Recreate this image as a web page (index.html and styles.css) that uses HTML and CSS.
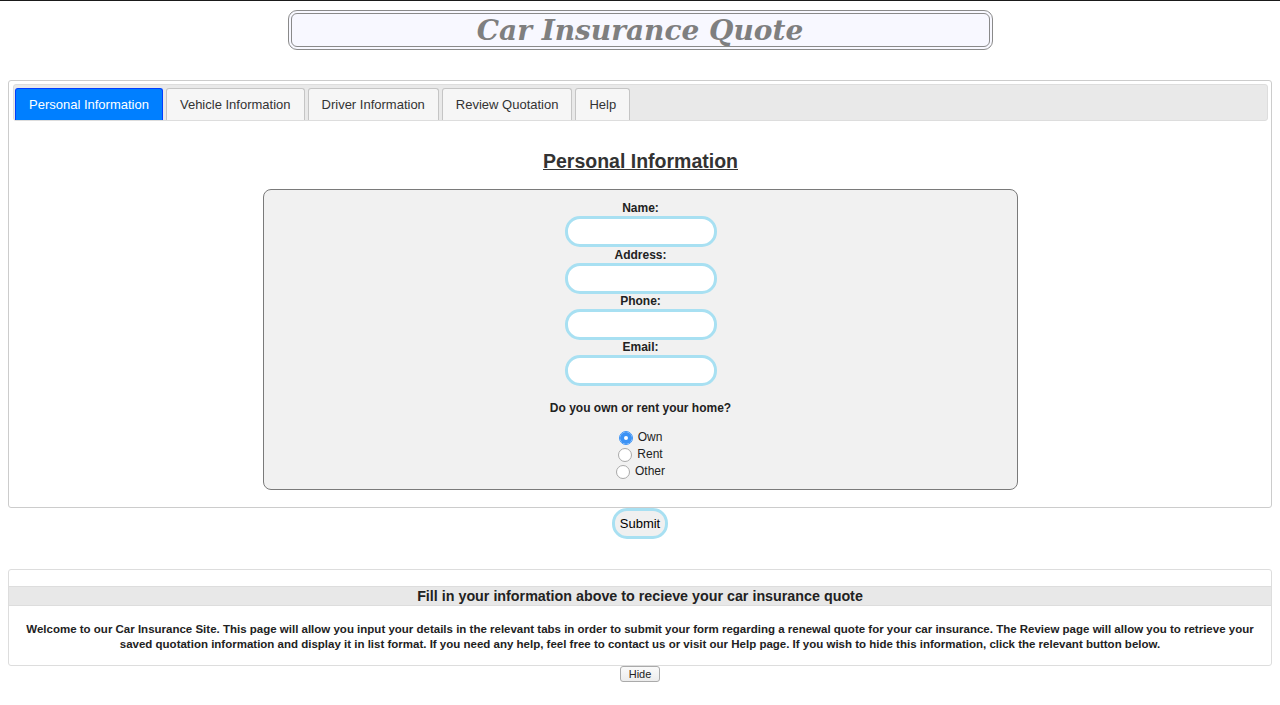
FILE: index.html
```html
<!DOCTYPE html>
<html lang="en">
<head>
<meta charset="utf-8">
<title>Car Insurance Quote</title>
<link rel="stylesheet" href="styles.css">
</head>
<body>
<div class="topline"></div>
<header class="title-box">
  <h1 class="title">Car Insurance Quote</h1>
</header>

<div class="page">
  <div class="tabs">
    <ul class="tab-bar">
      <li class="tab active">Personal Information</li>
      <li class="tab">Vehicle Information</li>
      <li class="tab">Driver Information</li>
      <li class="tab">Review Quotation</li>
      <li class="tab">Help</li>
    </ul>
    <div class="panel">
      <h2 class="panel-title">Personal Information</h2>
      <form class="form-box">
        <label class="field-label" for="name">Name:</label>
        <input class="field first" id="name" type="text">
        <label class="field-label" for="address">Address:</label>
        <input class="field" id="address" type="text">
        <label class="field-label" for="phone">Phone:</label>
        <input class="field" id="phone" type="text">
        <label class="field-label" for="email">Email:</label>
        <input class="field" id="email" type="text">
        <p class="question">Do you own or rent your home?</p>
        <div class="radios">
          <label class="radio"><input type="radio" name="home" checked> Own</label>
          <label class="radio"><input type="radio" name="home"> Rent</label>
          <label class="radio"><input type="radio" name="home"> Other</label>
        </div>
      </form>
    </div>
  </div>

  <div class="submit-row">
    <button class="submit" type="button">Submit</button>
  </div>

  <section class="info">
    <h3 class="info-head">Fill in your information above to recieve your car insurance quote</h3>
    <p class="info-text">Welcome to our Car Insurance Site. This page will allow you input your details in the relevant tabs in order to submit your form regarding a renewal quote for your car insurance. The Review page will allow you to retrieve your saved quotation information and display it in list format. If you need any help, feel free to contact us or visit our Help page. If you wish to hide this information, click the relevant button below.</p>
  </section>
  <div class="hide-row">
    <button class="hide" type="button">Hide</button>
  </div>
</div>
</body>
</html>
```
FILE: styles.css
```css
html, body {
  margin: 0;
  padding: 0;
  background: #fff;
}
body {
  font-family: "Liberation Sans", Arial, sans-serif;
  color: #222;
}
.topline {
  height: 1px;
  background: #1a1a1a;
}
.title-box {
  box-sizing: border-box;
  width: 705px;
  height: 40px;
  margin: 9px auto 0;
  border: 4px double #8a8a8a;
  border-radius: 9px;
  background: #f8f8ff;
  text-align: center;
}
.title {
  margin: 0;
  font-family: "DejaVu Serif", Georgia, serif;
  font-style: italic;
  font-weight: bold;
  font-size: 28px;
  line-height: 33px;
  color: #7f7f7f;
}
.page {
  padding: 0 8px;
}
.tabs {
  margin-top: 30px;
  border: 1px solid #cccccc;
  border-radius: 3px;
  padding: 3px 3px 0 4px;
}
.tab-bar {
  display: flex;
  gap: 3px;
  list-style: none;
  margin: 0;
  padding: 3px 1px 0;
  height: 32px;
  background: #e9e9e9;
  border: 1px solid #dddddd;
  border-radius: 3px;
}
.tab {
  box-sizing: border-box;
  height: 32px;
  padding: 0 13px;
  line-height: 31px;
  font-size: 13px;
  color: #333;
  background: #f6f6f6;
  border: 1px solid #c5c5c5;
  border-bottom: none;
  border-radius: 3px 3px 0 0;
}
.tab.active {
  background: #007fff;
  border-color: #003eff;
  color: #fff;
}
.panel {
  padding: 1px 0 17px;
}
.panel-title {
  margin: 27px 0 16px;
  text-align: center;
  font-size: 19.5px;
  line-height: 24px;
  font-weight: bold;
  text-decoration: underline;
  color: #333;
}
.form-box {
  box-sizing: border-box;
  width: 755px;
  margin: 0 auto;
  padding: 11px 0 9px;
  background: #f1f1f1;
  border: 1px solid #7a7a7a;
  border-radius: 8px;
  display: flex;
  flex-direction: column;
  align-items: center;
}
.field-label {
  font-size: 12px;
  font-weight: bold;
  line-height: 15px;
  color: #222;
}
.field {
  box-sizing: border-box;
  width: 152px;
  height: 31px;
  margin: 0;
  border: 3px solid #a8e0f2;
  border-radius: 15px;
  background: #fff;
  outline: none;
}
.field.first {
  margin-bottom: 1px;
}
.question {
  margin: 15px 0 13px;
  font-size: 12px;
  font-weight: bold;
  line-height: 15px;
}
.radios {
  display: flex;
  flex-direction: column;
  align-items: center;
}
.radio {
  font-size: 12px;
  line-height: 17px;
  display: flex;
  align-items: center;
  gap: 3px;
}
.radio input {
  appearance: none;
  -webkit-appearance: none;
  box-sizing: border-box;
  margin: 0 2px 0 0;
  width: 14px;
  height: 14px;
  border: 1px solid #a9a9a9;
  border-radius: 50%;
  background: #fff;
}
.radio input:checked {
  border-color: #3b92f5;
  box-shadow: inset 0 0 0 4px #3b92f5;
}
.submit-row {
  display: flex;
  justify-content: center;
}
.submit {
  box-sizing: border-box;
  height: 31px;
  padding: 0 5px;
  font-family: "Liberation Sans", Arial, sans-serif;
  font-size: 13px;
  color: #000;
  background: #f0f0f0;
  border: 3px solid #a8e0f2;
  border-radius: 15px;
}
.info {
  margin-top: 30px;
  border: 1px solid #dddddd;
  border-radius: 3px;
  padding: 16px 0 13px;
}
.info-head {
  margin: 0;
  height: 20px;
  box-sizing: border-box;
  background: #e8e8e8;
  border-top: 1px solid #dddddd;
  border-bottom: 1px solid #dddddd;
  text-align: center;
  font-size: 14.3px;
  line-height: 18px;
  font-weight: bold;
  color: #222;
}
.info-text {
  margin: 16px 0 0;
  padding: 0 14px;
  text-align: center;
  font-size: 11.5px;
  line-height: 15px;
  font-weight: bold;
  color: #222;
}
.hide-row {
  display: flex;
  justify-content: center;
}
.hide {
  height: 16px;
  padding: 0 8px;
  font-family: "Liberation Sans", Arial, sans-serif;
  font-size: 11px;
  line-height: 13px;
  color: #222;
  background: linear-gradient(#fafafa, #ececec);
  border: 1px solid #aaaaaa;
  border-radius: 3px;
}
```
